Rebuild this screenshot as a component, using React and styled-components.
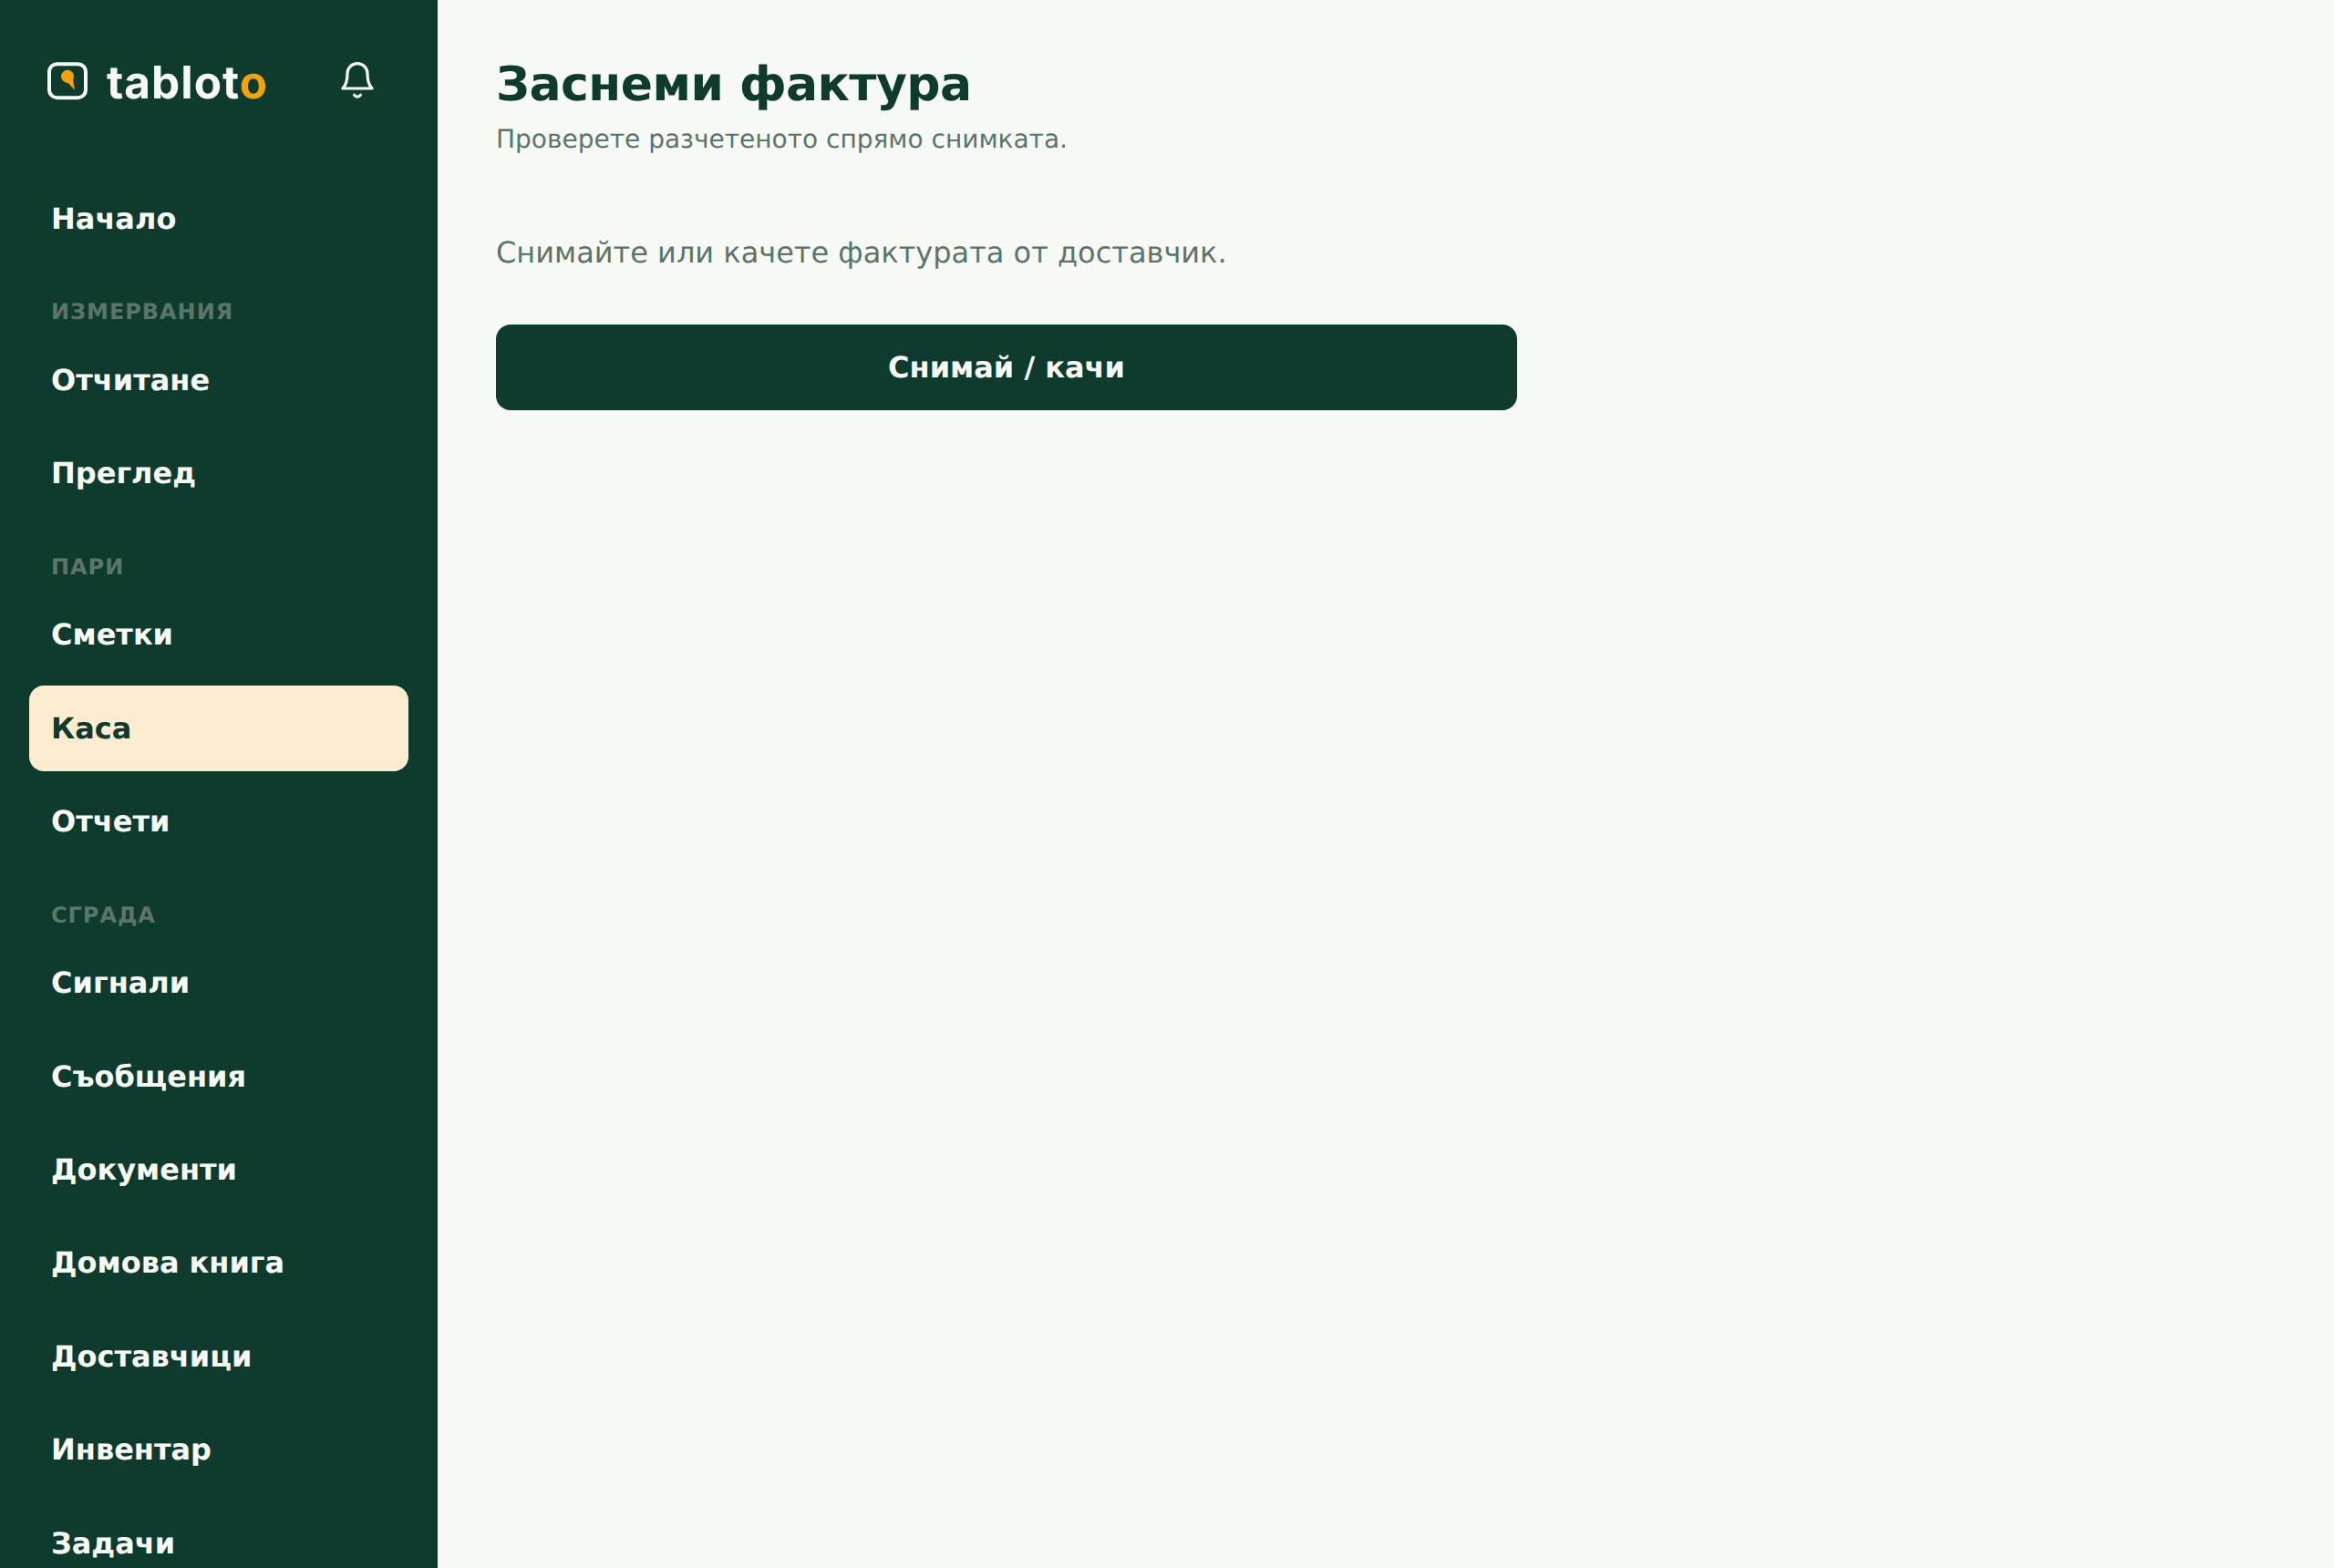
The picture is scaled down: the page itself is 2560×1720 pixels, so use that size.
import React from 'react';
import styled, { createGlobalStyle } from 'styled-components';

const color = {
  pine: '#0f3a2e',
  paper: '#f7f9f4',
  muted: '#5b756b',
  amber: '#f2a20d',
  cream: '#fcecd0',
};

const GlobalStyle = createGlobalStyle`
  *, *::before, *::after { box-sizing: border-box; }
  body {
    margin: 0;
    background: ${color.paper};
    color: ${color.pine};
    font: 32px/1.45 'DejaVu Sans', Verdana, sans-serif;
    text-rendering: geometricPrecision;
  }
  h1, p { margin: 0; }
`;

const Shell = styled.div`
  display: flex;
  height: 100vh;
  overflow: hidden;
`;

const Sidebar = styled.aside`
  flex: none;
  width: 480px;
  padding: 44px 32px 0;
  background: ${color.pine};
  color: ${color.paper};
  overflow: hidden;
`;

const Brand = styled.div`
  display: flex;
  align-items: center;
  justify-content: space-between;
  height: 88px;
  padding: 0 12px 0 16px;
  margin-bottom: 60.5px;
`;

const BellButton = styled.button`
  display: grid;
  place-items: center;
  width: 88px;
  height: 88px;
  padding: 0;
  border: 0;
  background: none;
  color: inherit;
`;

const Nav = styled.nav`
  display: flex;
  flex-direction: column;
  gap: 8px;
`;

const NavGroup = styled.div`
  padding: 30.4px 24px 1.6px;
  color: ${color.muted};
  font-size: 24px;
  font-weight: 700;
  letter-spacing: 0.04em;
  text-transform: uppercase;
`;

const NavLink = styled.a`
  flex: none;
  padding: 24px;
  border-radius: 16px;
  font-weight: 600;
  color: ${(p) => (p.$active ? color.pine : color.paper)};
  background: ${(p) => (p.$active ? color.cream : 'transparent')};
`;

const Main = styled.main`
  flex: 1;
  padding: 57px 64px;
`;

const Title = styled.h1`
  font-size: 52px;
  line-height: 1.4;
  font-weight: 700;
  letter-spacing: -0.01em;
`;

const Subtitle = styled.p`
  margin-top: 3px;
  font-size: 28px;
  color: ${color.muted};
`;

const Capture = styled.section`
  display: flex;
  flex-direction: column;
  gap: 55px;
  width: 1120px;
  margin-top: 81px;
`;

const Hint = styled.p`
  color: ${color.muted};
`;

const CaptureButton = styled.button`
  padding: 24px;
  border: 0;
  border-radius: 16px;
  background: ${color.pine};
  color: ${color.paper};
  font: inherit;
  font-weight: 600;
  text-rendering: inherit;
`;

const LogoSvg = styled.svg`
  flex: none;
  display: block;
  overflow: visible;
`;

function Logo() {
  return (
    <LogoSvg width="250" height="64" viewBox="0 0 250 64" role="img" aria-label="tabloto">
      <rect x="6" y="14.2" width="40" height="37" rx="8.5" fill="none" stroke={color.paper} strokeWidth="4" />
      <path d="M19 27.8a7 7 0 1 1 13.7 2c-.6 1.7-.7 2.8-.2 4.2l1.5 9-6.5-7.2c-.8-.8-1.6-1-2.6-1.1A7 7 0 0 1 19 27.8Z" fill={color.amber} />
      <text x="69" y="52" fontFamily="Inter, sans-serif" fontWeight="650" fontSize="49.5" textLength="176" fill={color.paper}>
        tablot<tspan fill={color.amber}>o</tspan>
      </text>
    </LogoSvg>
  );
}

function Bell() {
  return (
    <svg width="44" height="44" viewBox="0 0 44 44" fill="none" stroke={color.paper} strokeWidth="3.2" strokeLinecap="round" strokeLinejoin="round">
      <path d="M22 3.6a11 11 0 0 0-11 11c0 8-1 12.4-5 16.4h32c-4-4-5-8.4-5-16.4a11 11 0 0 0-11-11Z" />
      <path d="M18.6 38.2c1.6 2.6 5.2 2.6 6.8 0" />
    </svg>
  );
}

const sections = [
  { items: ['Начало'] },
  { title: 'Измервания', items: ['Отчитане', 'Преглед'] },
  { title: 'Пари', items: ['Сметки', 'Каса', 'Отчети'] },
  {
    title: 'Сграда',
    items: ['Сигнали', 'Съобщения', 'Документи', 'Домова книга', 'Доставчици', 'Инвентар', 'Задачи'],
  },
];

export default function App() {
  return (
    <>
      <GlobalStyle />
      <Shell>
        <Sidebar>
          <Brand>
            <Logo />
            <BellButton aria-label="Известия">
              <Bell />
            </BellButton>
          </Brand>
          <Nav>
            {sections.map((section) => (
              <React.Fragment key={section.items[0]}>
                {section.title && <NavGroup>{section.title}</NavGroup>}
                {section.items.map((item) => (
                  <NavLink key={item} $active={item === 'Каса'}>
                    {item}
                  </NavLink>
                ))}
              </React.Fragment>
            ))}
          </Nav>
        </Sidebar>
        <Main>
          <Title>Заснеми фактура</Title>
          <Subtitle>Проверете разчетеното спрямо снимката.</Subtitle>
          <Capture>
            <Hint>Снимайте или качете фактурата от доставчик.</Hint>
            <CaptureButton>Снимай / качи</CaptureButton>
          </Capture>
        </Main>
      </Shell>
    </>
  );
}
